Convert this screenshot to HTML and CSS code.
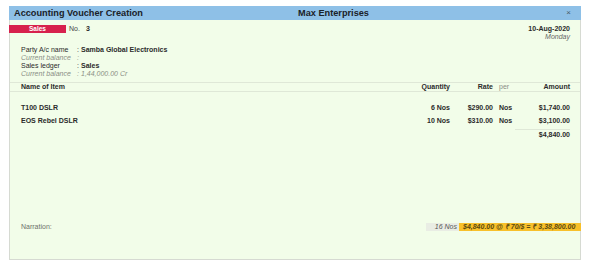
FILE: index.html
```html
<!DOCTYPE html>
<html>
<head>
<meta charset="utf-8">
<link rel="stylesheet" href="styles.css">
</head>
<body>
<div class="window">
  <div class="titlebar">
    <div class="title">Accounting Voucher Creation</div>
    <div class="company">Max Enterprises</div>
    <div class="close">×</div>
  </div>
  <div class="body">
    <div class="vhead">
      <div class="vtype">
        <span class="badge">Sales</span>
        <span class="no">No.</span>
        <span class="num">3</span>
      </div>
      <div class="date">
        <div class="d">10-Aug-2020</div>
        <div class="day">Monday</div>
      </div>
    </div>
    <div class="info">
      <div class="irow"><span class="lab">Party A/c name</span><span class="col">:</span><span class="val">Samba Global Electronics</span></div>
      <div class="irow sub"><span class="lab">Current balance</span><span class="col">:</span><span class="val"></span></div>
      <div class="irow"><span class="lab">Sales ledger</span><span class="col">:</span><span class="val">Sales</span></div>
      <div class="irow sub"><span class="lab">Current balance</span><span class="col">:</span><span class="val">1,44,000.00 Cr</span></div>
    </div>
    <div class="grid head">
      <div>Name of Item</div>
      <div class="r">Quantity</div>
      <div class="r">Rate</div>
      <div class="per">per</div>
      <div class="r">Amount</div>
    </div>
    <div class="items">
      <div class="grid item">
        <div>T100 DSLR</div>
        <div class="r">6 Nos</div>
        <div class="r">$290.00</div>
        <div class="per">Nos</div>
        <div class="r">$1,740.00</div>
      </div>
      <div class="grid item">
        <div>EOS Rebel DSLR</div>
        <div class="r">10 Nos</div>
        <div class="r">$310.00</div>
        <div class="per">Nos</div>
        <div class="r">$3,100.00</div>
      </div>
      <div class="total"><div class="tot">$4,840.00</div></div>
    </div>
    <div class="footer">
      <div class="narr">Narration:</div>
      <div class="fqty">16 Nos</div>
      <div class="fconv">$4,840.00 @ ₹ 70/$ = ₹ 3,38,800.00</div>
    </div>
  </div>
</div>
</body>
</html>
```
FILE: styles.css
```css
html, body {
  margin: 0;
  padding: 0;
  background: #ffffff;
}
body {
  font-family: "Liberation Sans", Arial, sans-serif;
  color: #2b2b2b;
  font-size: 7px;
}
.window {
  margin: 6px 0 0 9px;
  width: 572px;
  height: 254px;
  box-sizing: border-box;
  border: 1px solid #d6dad2;
  border-top: none;
  background: #f2fde9;
  display: flex;
  flex-direction: column;
}
.titlebar {
  height: 14px;
  margin: 0 -1px;
  background: #8ec0e7;
  display: grid;
  grid-template-columns: 284px 1fr auto;
  align-items: center;
  line-height: 14px;
  font-weight: bold;
  font-size: 9.2px;
  color: #1a2229;
  padding: 0 10px 0 5px;
}
.close {
  font-weight: normal;
  font-size: 8px;
  color: #4a5a66;
}
.body {
  flex: 1;
  display: flex;
  flex-direction: column;
}
.vhead {
  display: flex;
  justify-content: space-between;
  align-items: flex-start;
  margin-top: 5px;
  padding-right: 10px;
}
.vtype {
  display: flex;
  align-items: center;
  height: 8px;
  line-height: 8px;
}
.badge {
  width: 57px;
  height: 8px;
  margin-left: -1px;
  background: #d7214d;
  color: #ffffff;
  font-weight: bold;
  font-size: 6.5px;
  text-align: center;
}
.no {
  margin-left: 3px;
  color: #444;
}
.num {
  margin-left: 6px;
  font-weight: bold;
}
.date {
  text-align: right;
  line-height: 8px;
}
.date .d {
  font-weight: bold;
}
.date .day {
  font-style: italic;
  color: #666;
}
.info {
  margin-top: 5px;
  padding-left: 11px;
}
.irow {
  display: flex;
  line-height: 8px;
  height: 8px;
}
.lab {
  width: 56px;
}
.col {
  width: 4px;
}
.val {
  font-weight: bold;
}
.irow.sub {
  color: #8a8f86;
  font-style: italic;
}
.irow.sub .val {
  font-weight: normal;
}
.grid {
  display: grid;
  grid-template-columns: 1fr 40px 43px 27px 50px;
  padding: 0 10px 0 11px;
  line-height: 8px;
}
.grid .r {
  text-align: right;
}
.grid .per {
  padding-left: 6px;
}
.head {
  margin-top: 4px;
  border-top: 1px solid #dfe8d7;
  border-bottom: 1px solid #dfe8d7;
  font-weight: bold;
}
.head .per {
  font-weight: normal;
  color: #8a8f86;
}
.items {
  flex: 1;
  margin-top: 9px;
}
.item {
  line-height: 13px;
  font-weight: bold;
}
.total {
  display: flex;
  justify-content: flex-end;
  padding-right: 10px;
  margin-top: 2px;
}
.tot {
  width: 55px;
  border-top: 1px solid #dfe8d7;
  text-align: right;
  line-height: 9px;
  font-weight: bold;
}
.footer {
  display: flex;
  align-items: center;
  height: 8px;
  line-height: 8px;
  margin-bottom: 28px;
}
.narr {
  flex: 1;
  padding-left: 11px;
  color: #6d716a;
}
.fqty {
  width: 33px;
  box-sizing: border-box;
  background: #e9ede4;
  text-align: right;
  padding-right: 2px;
  font-style: italic;
  color: #555;
}
.fconv {
  width: 122px;
  box-sizing: border-box;
  margin-right: -1px;
  background: #f8c02a;
  padding-left: 4px;
  font-style: italic;
  font-weight: bold;
  color: #5a4a10;
}
```
